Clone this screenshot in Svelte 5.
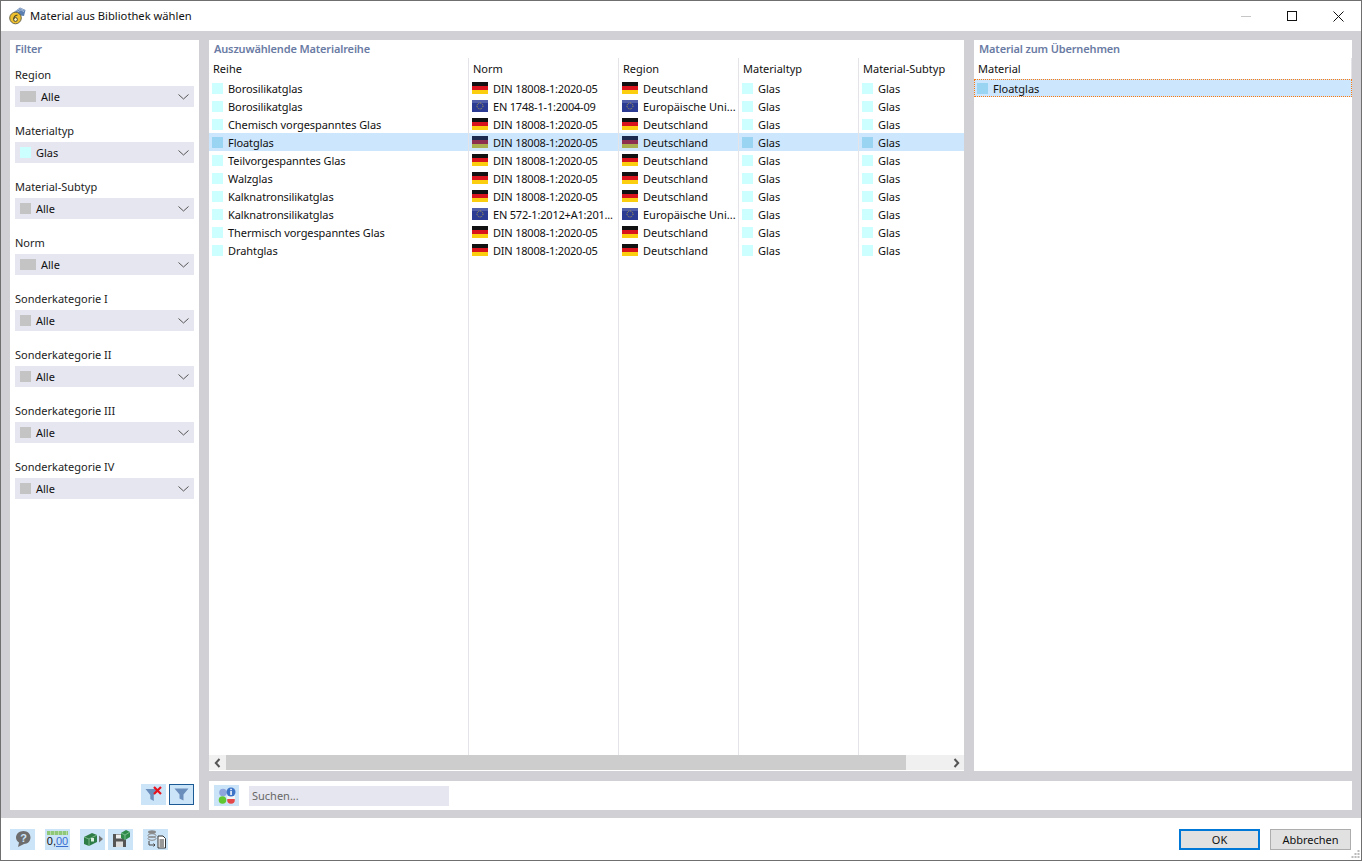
<script lang="ts">
  const filters = [
    { label: 'Region', value: 'Alle', swatch: 'wide' },
    { label: 'Materialtyp', value: 'Glas', swatch: 'glass' },
    { label: 'Material-Subtyp', value: 'Alle', swatch: 'gray' },
    { label: 'Norm', value: 'Alle', swatch: 'wide' },
    { label: 'Sonderkategorie I', value: 'Alle', swatch: 'gray' },
    { label: 'Sonderkategorie II', value: 'Alle', swatch: 'gray' },
    { label: 'Sonderkategorie III', value: 'Alle', swatch: 'gray' },
    { label: 'Sonderkategorie IV', value: 'Alle', swatch: 'gray' },
  ];

  const DIN = 'DIN 18008-1:2020-05';
  const rows = [
    { name: 'Borosilikatglas', norm: DIN, eu: false },
    { name: 'Borosilikatglas', norm: 'EN 1748-1-1:2004-09', eu: true },
    { name: 'Chemisch vorgespanntes Glas', norm: DIN, eu: false },
    { name: 'Floatglas', norm: DIN, eu: false, selected: true },
    { name: 'Teilvorgespanntes Glas', norm: DIN, eu: false },
    { name: 'Walzglas', norm: DIN, eu: false },
    { name: 'Kalknatronsilikatglas', norm: DIN, eu: false },
    { name: 'Kalknatronsilikatglas', norm: 'EN 572-1:2012+A1:201...', eu: true },
    { name: 'Thermisch vorgespanntes Glas', norm: DIN, eu: false },
    { name: 'Drahtglas', norm: DIN, eu: false },
  ];
</script>

{#snippet flag(eu, selected)}
  {#if eu}
    <svg class="flag" viewBox="0 0 16 12" width="16" height="12">
      <rect width="16" height="12" fill="#2b3a93" />
      <rect width="16" height="3" fill="#6a76b8" opacity="0.6" />
      <circle cx="8" cy="6" r="3" fill="none" stroke="#b7a94a" stroke-width="1" stroke-dasharray="1 1" />
    </svg>
  {:else}
    <svg class="flag" viewBox="0 0 16 12" width="16" height="12">
      <rect width="16" height="4" fill={selected ? '#1c2a50' : '#111'} />
      <rect y="4" width="16" height="4" fill={selected ? '#8c2f50' : '#d9141c'} />
      <rect y="8" width="16" height="4" fill={selected ? '#aab050' : '#fbcf10'} />
    </svg>
  {/if}
{/snippet}

<div class="window">
  <header class="titlebar">
    <svg class="app-icon" viewBox="0 0 17 18" width="17" height="18">
      <path d="M5 5L11 0.500L16.500 3L15 9L8 8Z" fill="#5b7fb0" />
      <path d="M6 4.500L11.500 1.500L15.500 3.500M7 6L12 2.800L15 4.800" stroke="#c7d6ea" stroke-width="0.7" fill="none" />
      <circle cx="6.500" cy="11" r="5.800" fill="#eec02e" stroke="#5f5a40" stroke-width="0.9" />
      <circle cx="6.500" cy="12.500" r="1.900" fill="#fff3b8" stroke="#4e4a2a" stroke-width="1" />
      <path d="M4.600 12.500Q4.800 8.500 8.500 8" fill="none" stroke="#4e4a2a" stroke-width="1.100" />
    </svg>
    <span class="title">Material aus Bibliothek wählen</span>
    <div class="win-controls">
      <span class="ctl"><svg width="10" height="10" viewBox="0 0 10 10"><path d="M0 5.500H10" stroke="#c6c6c6" /></svg></span>
      <span class="ctl"><svg width="10" height="10" viewBox="0 0 10 10"><rect x="0.500" y="0.500" width="9" height="9" fill="none" stroke="#111" /></svg></span>
      <span class="ctl"><svg width="11" height="11" viewBox="0 0 11 11"><path d="M0.500 0.500L10.500 10.500M10.500 0.500L0.500 10.500" stroke="#111" /></svg></span>
    </div>
  </header>

  <main class="body">
    <aside class="panel filter">
      <h2>Filter</h2>
      <div class="filter-list">
        {#each filters as f}
          <div class="filter-item">
            <div class="filter-label">{f.label}</div>
            <div class="select">
              <span class="swatch {f.swatch}"></span>
              <span class="select-value">{f.value}</span>
              <svg class="chev" width="11" height="6" viewBox="0 0 11 6"><path d="M0.500 0.500L5.500 5L10.500 0.500" fill="none" stroke="#555" /></svg>
            </div>
          </div>
        {/each}
      </div>
      <div class="filter-tools">
        <button class="icon-btn">
          <svg width="20" height="20" viewBox="0 0 20 20">
            <path d="M1.500 4H14.500L9.800 10V16L6.300 14V10Z" fill="#6b8fbd" />
            <path d="M10 2L17 9M17 2L10 9" stroke="#e8121d" stroke-width="2.200" />
          </svg>
        </button>
        <button class="icon-btn active">
          <svg width="20" height="20" viewBox="0 0 20 20">
            <path d="M2.500 3.500H16.500L11.500 9.500V15.500L7.500 13.500V9.500Z" fill="#6b8fbd" />
          </svg>
        </button>
      </div>
    </aside>

    <section class="panel series">
      <h2>Auszuwählende Materialreihe</h2>
      <div class="table">
        <div class="tr head">
          <div class="td">Reihe</div>
          <div class="td">Norm</div>
          <div class="td">Region</div>
          <div class="td">Materialtyp</div>
          <div class="td">Material-Subtyp</div>
        </div>
        {#each rows as r}
          <div class="tr" class:selected={r.selected}>
            <div class="td"><span class="swatch glass"></span><span class="name">{r.name}</span></div>
            <div class="td">{@render flag(r.eu, r.selected)}<span class="norm">{r.norm}</span></div>
            <div class="td">{@render flag(r.eu, r.selected)}<span>{r.eu ? 'Europäische Uni...' : 'Deutschland'}</span></div>
            <div class="td"><span class="swatch glass"></span><span>Glas</span></div>
            <div class="td"><span class="swatch glass"></span><span>Glas</span></div>
          </div>
        {/each}
        <div class="tr fill">
          <div class="td"></div><div class="td"></div><div class="td"></div><div class="td"></div><div class="td"></div>
        </div>
      </div>
      <div class="scrollbar">
        <span class="sb-btn"><svg width="7" height="10" viewBox="0 0 7 10"><path d="M5.500 1L1.800 5L5.500 9" fill="none" stroke="#555" stroke-width="2" /></svg></span>
        <div class="thumb"></div>
        <span class="sb-btn end"><svg width="7" height="10" viewBox="0 0 7 10"><path d="M1.500 1L5.200 5L1.500 9" fill="none" stroke="#555" stroke-width="2" /></svg></span>
      </div>
    </section>

    <section class="panel pick">
      <h2>Material zum Übernehmen</h2>
      <div class="pick-head">Material</div>
      <div class="pick-row"><span class="swatch glass"></span><span>Floatglas</span></div>
    </section>

    <div class="panel searchbar">
      <button class="icon-btn">
        <svg width="20" height="20" viewBox="0 0 20 20">
          <circle cx="6" cy="6.500" r="3.800" fill="#8fa6dc" />
          <circle cx="5.500" cy="14" r="3.800" fill="#62c832" />
          <circle cx="14" cy="14" r="3.800" fill="#e44848" />
          <rect x="10" y="10" width="8" height="3" fill="#f4f4f4" />
          <circle cx="14" cy="6" r="4.500" fill="#3d74c8" />
          <rect x="13.300" y="5" width="1.500" height="4" fill="#fff" />
          <rect x="13.300" y="2.800" width="1.500" height="1.400" fill="#fff" />
        </svg>
      </button>
      <input class="search" placeholder="Suchen..." />
    </div>
  </main>

  <footer class="footer">
    <div class="tools">
      <button class="icon-btn">
        <svg width="20" height="20" viewBox="0 0 20 20">
          <path d="M10.500 2C14.500 2 17.500 4.800 17.500 8.500C17.500 12.200 14.500 15 11 15L5 18L6 13.500C4 12.300 3 10.500 3 8.500C3 4.800 6.500 2 10.500 2Z" fill="#6d6d6d" />
          <text x="10.500" y="12.500" class="q">?</text>
        </svg>
      </button>
      <button class="icon-btn num">
        <span class="ruler"></span>
        <span class="num-text">0,<u>00</u></span>
      </button>
      <button class="icon-btn">
        <svg width="22" height="20" viewBox="0 0 22 20">
          <path d="M2 8L10 4L15 6V13L7 17L2 15Z" fill="#2e7d46" />
          <path d="M2 8L7 10L15 6M7 10V17" fill="none" stroke="#9ad0aa" stroke-width="0.700" />
          <rect x="9" y="9" width="3" height="3.500" fill="#d9efe0" />
          <path d="M17 6.500L21 10L17 13.500Z" fill="#777" />
        </svg>
      </button>
      <button class="icon-btn">
        <svg width="22" height="20" viewBox="0 0 22 20">
          <path d="M3 5H14L16 7V18H3Z" fill="#555" />
          <rect x="6" y="5.500" width="6" height="4" fill="#eee" />
          <rect x="6" y="12.500" width="7" height="5.500" fill="#ddd" />
          <path d="M11 4L16 1L20 3V8L15 11L11 9Z" fill="#2e8b4a" />
          <path d="M11 4L15 6L20 3M15 6V11" fill="none" stroke="#9ad0aa" stroke-width="0.700" />
        </svg>
      </button>
      <button class="icon-btn">
        <svg width="22" height="20" viewBox="0 0 22 20">
          <ellipse cx="7" cy="3" rx="4" ry="1.800" fill="#888" />
          <ellipse cx="7" cy="6.500" rx="4" ry="1.800" fill="none" stroke="#888" />
          <ellipse cx="7" cy="9.500" rx="4" ry="1.800" fill="none" stroke="#888" />
          <path d="M4 12V16H10M8.500 14.500L10 16L8.500 17.500" fill="none" stroke="#444" />
          <path d="M13 7H18L20.500 9.500V19H13Z" fill="#fff" stroke="#333" />
          <path d="M14.500 11H19M14.500 13H19M14.500 15H19M14.500 17H19" stroke="#333" />
        </svg>
      </button>
    </div>
    <div class="actions">
      <button class="btn primary">OK</button>
      <button class="btn">Abbrechen</button>
    </div>
    <svg class="grip" width="9" height="9" viewBox="0 0 9 9">
      <path d="M6.500 0h2v2h-2zM3.500 3h2v2h-2zM6.500 3h2v2h-2zM0.500 6h2v2h-2zM3.500 6h2v2h-2zM6.500 6h2v2h-2z" fill="#bbb" />
    </svg>
  </footer>
</div>

<style>
  :global(body) {
    margin: 0;
    background: #fff;
  }

  .window {
    width: 1362px;
    height: 861px;
    box-sizing: border-box;
    border: 1px solid #6f6f6f;
    display: flex;
    flex-direction: column;
    overflow: hidden;
    font-family: "Noto Sans", "Open Sans", sans-serif;
    font-size: 11px;
    color: #111;
    background: #fff;
  }

  .titlebar {
    height: 30px;
    flex-shrink: 0;
    display: flex;
    align-items: center;
    padding-left: 8px;
  }
  .app-icon { flex-shrink: 0; }
  .title {
    margin-left: 4px;
    margin-bottom: 2px;
    font-size: 11.200px;
    color: #111;
  }
  .win-controls {
    margin-left: auto;
    display: flex;
  }
  .ctl {
    width: 46px;
    height: 30px;
    display: flex;
    align-items: center;
    justify-content: center;
  }

  .body {
    height: 787px;
    flex-shrink: 0;
    box-sizing: border-box;
    background: #d0d0d5;
    padding: 9px 9px 8px;
    display: grid;
    grid-template-columns: 189px 755px 378px;
    grid-template-rows: 731px 29px;
    gap: 10px;
  }

  .panel {
    background: #fff;
    min-width: 0;
    min-height: 0;
  }
  h2 {
    margin: 0;
    height: 18px;
    line-height: 18px;
    padding-left: 5px;
    font-size: 11px;
    font-weight: 600;
    letter-spacing: -0.150px;
    color: #6a7ba4;
  }

  .filter {
    grid-row: 1 / 3;
    display: flex;
    flex-direction: column;
  }
  .filter-list {
    flex: 1;
    padding-top: 8px;
  }
  .filter-item {
    height: 56px;
    padding: 0 5px;
  }
  .filter-label {
    height: 20px;
    line-height: 18px;
    color: #222;
  }
  .select {
    height: 21px;
    background: #e6e6f0;
    display: flex;
    align-items: center;
    padding-left: 5px;
    padding-right: 5px;
  }
  .select-value { margin-left: 5px; }
  .chev { margin-left: auto; }

  .swatch {
    display: inline-block;
    width: 11px;
    height: 11px;
    flex-shrink: 0;
  }
  .swatch.glass { background: #ccffff; }
  .swatch.gray { background: #c4c4c4; }
  .swatch.wide { background: #c4c4c4; width: 16px; }

  .filter-tools {
    display: flex;
    justify-content: flex-end;
    gap: 3px;
    padding: 0 5px 5px 0;
  }

  .icon-btn {
    width: 25px;
    height: 21px;
    padding: 0;
    border: 0;
    background: #cce4f8;
    display: flex;
    align-items: center;
    justify-content: center;
    flex-shrink: 0;
    box-sizing: border-box;
  }
  .icon-btn.active { border: 1px solid #1c5a96; }

  .series {
    display: flex;
    flex-direction: column;
  }
  .table {
    flex: 1;
    display: flex;
    flex-direction: column;
    min-height: 0;
  }
  .tr {
    height: 18px;
    display: grid;
    grid-template-columns: 260px 150px 120px 120px 105px;
    flex-shrink: 0;
  }
  .tr.head { height: 21px; }
  .tr.fill {
    flex: 1;
    height: auto;
  }
  .td {
    display: flex;
    align-items: center;
    gap: 5px;
    box-sizing: border-box;
    padding-left: 3px;
    border-right: 1px solid #e4e4e8;
    white-space: nowrap;
    overflow: hidden;
  }
  .td:last-child { border-right: 0; }
  .head .td { padding-left: 4px; }
  .name { letter-spacing: -0.080px; }
  .norm { letter-spacing: -0.200px; }
  .tr.selected { background: #cce6fd; }
  .tr.selected .swatch.glass { background: #99d5f2; }
  .flag { flex-shrink: 0; }

  .scrollbar {
    height: 15px;
    margin-bottom: 1px;
    background: #f0f0f0;
    display: flex;
    align-items: center;
  }
  .sb-btn {
    width: 17px;
    height: 15px;
    flex-shrink: 0;
    display: flex;
    align-items: center;
    justify-content: center;
  }
  .sb-btn.end {
    margin-left: auto;
    padding-left: 2px;
    box-sizing: border-box;
  }
  .thumb {
    width: 680px;
    height: 15px;
    background: #cdcdcd;
  }

  .pick-head {
    height: 21px;
    line-height: 21px;
    padding-left: 4px;
    border-right: 1px solid #e4e4e8;
  }
  .pick-row {
    height: 18px;
    background: #cce6fd;
    border: 1px dotted #ff7a0a;
    box-sizing: border-box;
    display: flex;
    align-items: center;
    gap: 5px;
    padding-left: 2px;
  }
  .pick-row .swatch { background: #99d5f2; }

  .searchbar {
    grid-column: 2 / 4;
    display: flex;
    align-items: center;
    padding-left: 5px;
    gap: 10px;
  }
  .search {
    width: 200px;
    height: 20px;
    box-sizing: border-box;
    border: 0;
    background: #e6e6f0;
    padding: 0 3px;
    font: inherit;
    outline: none;
  }
  .search::placeholder { color: #666; opacity: 1; }

  .footer {
    flex: 1;
    position: relative;
    display: flex;
    align-items: center;
    justify-content: space-between;
    padding: 0 10px 0 9px;
  }
  .tools {
    display: flex;
    gap: 3px;
  }
  .tools .icon-btn:nth-child(2) { margin-left: 7px; margin-right: 7px; }
  .tools .icon-btn:nth-child(5) { margin-left: 7px; }
  .q {
    font-size: 11px;
    font-weight: 700;
    fill: #cce4f8;
    text-anchor: middle;
  }
  .num {
    flex-direction: column;
    justify-content: flex-start;
    padding-top: 2px;
  }
  .ruler {
    width: 21px;
    height: 4px;
    background: repeating-linear-gradient(90deg, #8fc878 0 3px, #b8dca8 3px 4px);
  }
  .num-text {
    font-size: 11px;
    line-height: 13px;
    color: #111;
  }
  .num-text u { color: #3a6fd0; }

  .actions {
    display: flex;
    gap: 10px;
  }
  .btn {
    width: 81px;
    height: 21px;
    box-sizing: border-box;
    background: #e1e1e1;
    border: 1px solid #adadad;
    font: inherit;
    color: #111;
    padding: 0;
  }
  .btn.primary { border: 2px solid #0078d7; }
  .grip {
    position: absolute;
    right: 1px;
    bottom: 1px;
  }
</style>
